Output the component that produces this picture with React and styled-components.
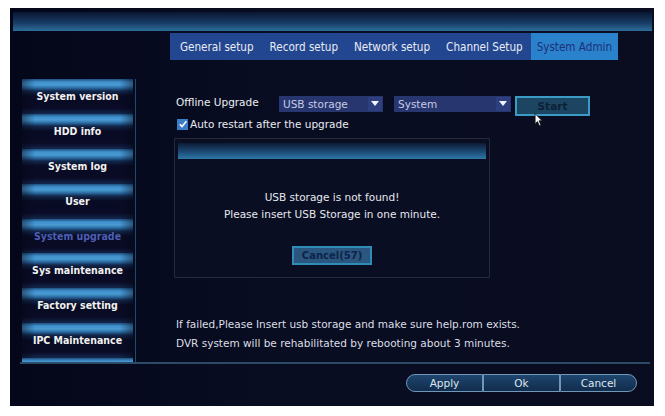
import React from 'react';
import styled, { createGlobalStyle } from 'styled-components';

const GlobalStyle = createGlobalStyle`
  html, body { margin: 0; padding: 0; background: #ffffff; }
  #root { width: 665px; height: 416px; }
`;

const tabs = ['General setup', 'Record setup', 'Network setup', 'Channel Setup', 'System Admin'];
const menu = [
  'System version',
  'HDD info',
  'System log',
  'User',
  'System upgrade',
  'Sys maintenance',
  'Factory setting',
  'IPC Maintenance',
];

const App = () => {
  return (
    <>
      <GlobalStyle />
      <Screen>
        <Banner />
        <TabRow>
          <Tabs>
            {tabs.map((t) => (
              <Tab key={t} $active={t === 'System Admin'}>{t}</Tab>
            ))}
          </Tabs>
        </TabRow>
        <Body>
          <Sidebar>
            {menu.map((m) => (
              <MenuItem key={m} $active={m === 'System upgrade'}>{m}</MenuItem>
            ))}
            <MenuTail />
          </Sidebar>
          <Content>
            <UpgradeRow>
              <Label>Offline Upgrade</Label>
              <Select $w={104}>
                <span>USB storage</span>
                <Arrow />
              </Select>
              <Select $w={117}>
                <span>System</span>
                <Arrow />
              </Select>
              <StartButton>Start</StartButton>
              <Cursor viewBox="0 0 12 18">
                <path d="M1 1 L1 14 L4 11 L6.5 16.5 L8.5 15.5 L6 10 L10 10 Z" fill="#ffffff" stroke="#111" strokeWidth="1" />
              </Cursor>
            </UpgradeRow>
            <CheckRow>
              <Check>
                <svg viewBox="0 0 10 10" width="10" height="10">
                  <path d="M1.8 5.2 L4 7.5 L8.4 2.3" fill="none" stroke="#ffffff" strokeWidth="1.6" />
                </svg>
              </Check>
              <span>Auto restart after the upgrade</span>
            </CheckRow>
            <Dialog>
              <DialogHeader />
              <DialogBody>
                <Message>USB storage is not found!</Message>
                <Message>Please insert USB Storage in one minute.</Message>
                <DialogButton>Cancel(57)</DialogButton>
              </DialogBody>
            </Dialog>
            <Notes>
              <Note>If failed,Please Insert usb storage and make sure help.rom exists.</Note>
              <Note>DVR system will be rehabilitated by rebooting about 3 minutes.</Note>
            </Notes>
          </Content>
        </Body>
        <Footer>
          <ButtonGroup>
            <PillButton $pos="left">Apply</PillButton>
            <PillButton>Ok</PillButton>
            <PillButton $pos="right">Cancel</PillButton>
          </ButtonGroup>
        </Footer>
      </Screen>
    </>
  );
};

const Screen = styled.div`
  width: 644px;
  height: 398px;
  margin: 8px 0 0 10px;
  background: linear-gradient(90deg, #04071a 0%, #090d22 40%, #0a0d20 100%);
  display: flex;
  flex-direction: column;
  padding-top: 4px;
  box-sizing: border-box;
  font-family: 'DejaVu Sans', Verdana, sans-serif;
  overflow: hidden;
`;

const Banner = styled.div`
  height: 19px;
  margin: 0 2px 0 3px;
  background: linear-gradient(180deg, #0a1630 0%, #173a62 55%, #2c6d9a 100%);
`;

const TabRow = styled.div`
  margin-top: 2px;
  padding-left: 160px;
  display: flex;
`;

const Tabs = styled.div`
  display: flex;
  height: 27px;
  background: #234690;
`;

const Tab = styled.div`
  display: flex;
  align-items: center;
  padding: ${({ $active }) => ($active ? '0 6px 0 6px' : '0 8px')};
  &:first-child {
    padding-left: 10px;
  }
  font-family: 'DejaVu Sans Condensed', 'DejaVu Sans', sans-serif;
  font-size: 11.6px;
  color: ${({ $active }) => ($active ? '#1c2f78' : '#e8ecf4')};
  background: ${({ $active }) => ($active ? '#2b82cc' : 'transparent')};
  white-space: nowrap;
`;

const Body = styled.div`
  display: flex;
  margin-top: 19px;
  height: 283px;
`;

const Sidebar = styled.div`
  width: 126px;
  padding-left: 12px;
  padding-right: 2px;
  box-sizing: border-box;
  border-right: 1px solid #1f4a6a;
  display: flex;
  flex-direction: column;
`;

const MenuItem = styled.div`
  height: 35px;
  padding-top: 10px;
  box-sizing: border-box;
  text-align: center;
  font-family: 'DejaVu Sans Condensed', 'DejaVu Sans', sans-serif;
  font-size: 10.5px;
  font-weight: bold;
  line-height: 14px;
  color: ${({ $active }) => ($active ? '#4d5fb4' : '#f2f2f2')};
  background:
    linear-gradient(90deg, rgba(4, 6, 20, 0.45) 0%, rgba(4, 6, 20, 0) 12%, rgba(4, 6, 20, 0) 88%, rgba(4, 6, 20, 0.45) 100%),
    linear-gradient(180deg, #1f507e 0px, #3f92cf 3px, #4a9ad2 6px, #2a6aa2 9px, #13284c 12px, #080b24 17px, #0a0b26 29px, #14284e 35px);
  white-space: nowrap;
`;

const MenuTail = styled.div`
  height: 4px;
  background: linear-gradient(180deg, #1f507e 0px, #3f92cf 3px, #4a9ad2 4px);
`;

const Content = styled.div`
  flex: 1;
  position: relative;
  padding: 16px 0 0 40px;
  color: #e4e6ec;
`;

const UpgradeRow = styled.div`
  display: flex;
  align-items: center;
  height: 20px;
  position: relative;
`;

const Label = styled.div`
  width: 103px;
  font-size: 10.5px;
  margin-top: -6px;
  color: #eceef2;
`;

const Select = styled.div`
  width: ${({ $w }) => $w}px;
  height: 16px;
  margin-right: 11px;
  margin-top: -3px;
  background: #283670;
  display: flex;
  align-items: center;
  justify-content: space-between;
  padding-left: 4px;
  box-sizing: border-box;
  font-size: 10.5px;
  color: #c6cbe4;
`;

const Arrow = styled.div`
  width: 14px;
  height: 14px;
  margin-right: 1px;
  background: #2e3f80;
  display: flex;
  align-items: center;
  justify-content: center;
  &::after {
    content: '';
    border-left: 4px solid transparent;
    border-right: 4px solid transparent;
    border-top: 5px solid #f4f6ff;
  }
`;

const StartButton = styled.div`
  width: 75px;
  height: 20px;
  margin-left: -7px;
  margin-top: 2px;
  box-sizing: border-box;
  border: 2px solid #3a9cc4;
  background: #1b4560;
  color: #0c2036;
  font-size: 10.5px;
  font-weight: bold;
  display: flex;
  align-items: center;
  justify-content: center;
`;

const Cursor = styled.svg`
  position: absolute;
  left: 358px;
  top: 18px;
  width: 10px;
  height: 14px;
`;

const CheckRow = styled.div`
  display: flex;
  align-items: center;
  gap: 2px;
  margin-top: 3px;
  font-size: 10.5px;
  color: #e8eaf0;
`;

const Check = styled.div`
  width: 11px;
  height: 11px;
  margin-left: 1px;
  background: #3a7cc8;
  display: flex;
  align-items: center;
  justify-content: center;
`;

const Dialog = styled.div`
  width: 316px;
  height: 140px;
  margin-top: 8px;
  margin-left: -2px;
  border: 1px solid #262a3a;
  background: #0a0e22;
  box-sizing: border-box;
  padding: 4px 3px 0;
  display: flex;
  flex-direction: column;
`;

const DialogHeader = styled.div`
  height: 16px;
  background: linear-gradient(180deg, #0c1a34 0%, #1c4a74 55%, #2f78a8 100%);
`;

const DialogBody = styled.div`
  flex: 1;
  display: flex;
  flex-direction: column;
  align-items: center;
  padding-top: 30px;
`;

const Message = styled.div`
  font-size: 10.5px;
  line-height: 17px;
  color: #e6e8ee;
`;

const DialogButton = styled.div`
  margin-top: 23px;
  width: 80px;
  height: 19px;
  box-sizing: border-box;
  border: 2px solid #2f8cb6;
  background: #2a5680;
  color: #0e2448;
  font-size: 10px;
  font-weight: bold;
  display: flex;
  align-items: center;
  justify-content: center;
`;

const Notes = styled.div`
  margin-top: 37px;
`;

const Note = styled.div`
  font-size: 10.5px;
  line-height: 19px;
  color: #dcdee4;
  white-space: nowrap;
`;

const Footer = styled.div`
  margin: 0 4px 0 10px;
  border-top: 2px solid #2a4a66;
  flex: 1;
  display: flex;
  justify-content: flex-end;
  padding: 10px 13px 0 0;
`;

const ButtonGroup = styled.div`
  display: flex;
  height: 18px;
`;

const PillButton = styled.div`
  width: 77px;
  box-sizing: border-box;
  border: 1px solid #6f98b8;
  border-radius: ${({ $pos }) =>
    $pos === 'left' ? '9px 0 0 9px' : $pos === 'right' ? '0 9px 9px 0' : '0'};
  background: linear-gradient(180deg, #1f4670 0%, #163659 60%, #122c4c 100%);
  color: #dfe6ee;
  font-size: 10.5px;
  display: flex;
  align-items: center;
  justify-content: center;
`;

export default App;
